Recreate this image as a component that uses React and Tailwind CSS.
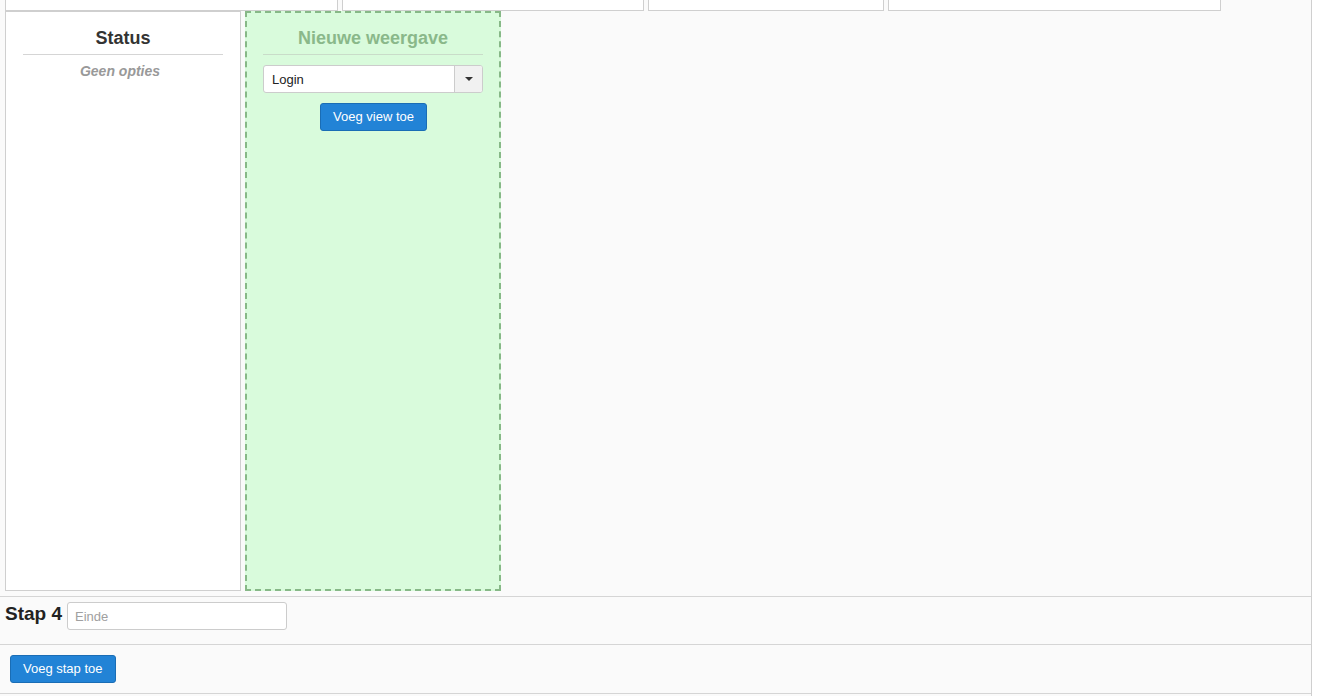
import React from "react";

const topBoxes = [333, 302, 236, 333];

const App = () => {
  return (
    <div
      className="w-[1312px] min-h-screen bg-[#fafafa] border-r border-[#cfcfcf] text-[#333]"
      style={{ fontFamily: '"Liberation Sans", Arial, sans-serif' }}
    >
      {/* Previous step columns (bottom edges) */}
      <div className="flex gap-1 pl-[5px] h-[11px]">
        {topBoxes.map((w, i) => (
          <div
            key={i}
            style={{ width: w }}
            className="h-[11px] bg-white border border-t-0 border-[#cfcfcf]"
          />
        ))}
      </div>

      {/* Columns */}
      <div className="flex gap-1 pl-[5px] h-[580px]">
        <div className="w-[236px] h-[580px] bg-white border border-[#cfcfcf] px-[17px] pt-[15px] flex flex-col items-center">
          <h3 className="w-full text-center text-[18px] leading-[22px] font-bold pb-[5px] border-b border-[#d5d5d5]">
            Status
          </h3>
          <p className="mt-[6px] mr-[6px] text-[14px] leading-[20px] font-bold italic text-[#999]">
            Geen opties
          </p>
        </div>

        <div className="w-[256px] h-[580px] bg-[#d9fbdc] border-2 border-dashed border-[#87b887] px-4 pt-[14px] flex flex-col items-center">
          <h3 className="w-full text-center text-[18px] leading-[22px] font-bold text-[#8ab88a] pb-[5px] border-b border-[#c9dcc9]">
            Nieuwe weergave
          </h3>
          <div className="w-full mt-[10px] h-[28px] flex bg-white border border-[#cccccc] rounded-[3px] overflow-hidden">
            <div className="flex-1 pl-2 text-[13px] leading-[27px] text-[#222]">Login</div>
            <div className="w-[28px] bg-[#f1f1f1] border-l border-[#cccccc] flex items-center justify-center">
              <span className="w-0 h-0 border-l-[4px] border-r-[4px] border-t-[4px] border-l-transparent border-r-transparent border-t-[#333]" />
            </div>
          </div>
          <button className="mt-[10px] h-[28px] pl-3 pr-[12px] ml-[1px] text-[13px] text-white bg-[#2283d6] border border-[#1a6db5] rounded-[3px]">
            Voeg view toe
          </button>
        </div>
      </div>

      {/* Step row */}
      <div className="mt-[5px] border-t border-[#d5d5d5] h-[48px] flex items-start pt-[5px]">
        <span className="ml-[5px] text-[19px] leading-[24px] font-bold text-[#222]">Stap 4</span>
        <input
          placeholder="Einde"
          className="ml-[5px] w-[220px] h-[28px] px-[7px] text-[13px] bg-white border border-[#cccccc] rounded-[3px] placeholder:text-[#a0a0a0] outline-none"
        />
      </div>

      {/* Add step row */}
      <div className="border-t border-b border-[#d5d5d5] h-[50px] pl-[10px] pt-[10px]">
        <button className="h-[28px] px-3 text-[13px] text-white bg-[#2283d6] border border-[#1a6db5] rounded-[3px]">
          Voeg stap toe
        </button>
      </div>
    </div>
  );
};

export default App;
